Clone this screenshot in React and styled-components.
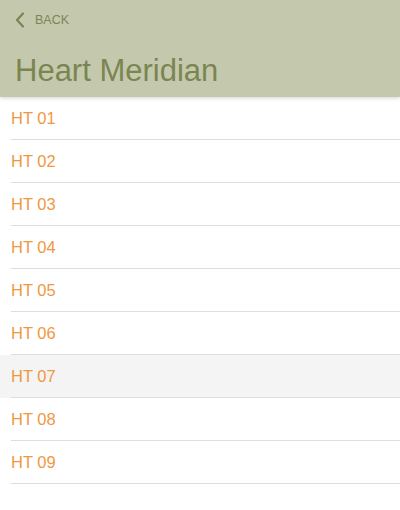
import React from "react";
import styled, { createGlobalStyle } from "styled-components";

const GlobalStyle = createGlobalStyle`
  html, body {
    margin: 0;
    padding: 0;
    background: #ffffff;
    font-family: "Liberation Sans", Arial, sans-serif;
  }
`;

const Page = styled.div`
  width: 400px;
  min-height: 510px;
  background: #ffffff;
`;

const Header = styled.header`
  position: relative;
  z-index: 1;
  height: 97px;
  box-sizing: border-box;
  padding: 10px 15px 0 15px;
  background: #c4c9ae;
  box-shadow: 0 1px 4px rgba(0, 0, 0, 0.18);
  display: flex;
  flex-direction: column;
`;

const BackButton = styled.button`
  display: flex;
  align-items: center;
  gap: 10px;
  height: 20px;
  padding: 0;
  border: none;
  background: none;
  color: #7b8552;
  font-family: inherit;
  font-size: 12.5px;
  cursor: pointer;
`;

const Title = styled.h1`
  margin: 23px 0 0 0;
  font-size: 31px;
  font-weight: 400;
  line-height: 36px;
  color: #7b8552;
`;

const List = styled.ul`
  list-style: none;
  margin: 0;
  padding: 0;
`;

const Row = styled.li`
  padding-left: 11px;
  background: ${(p) => (p.$active ? "#f4f4f4" : "#ffffff")};
`;

const RowInner = styled.div`
  height: 42px;
  display: flex;
  align-items: center;
  border-bottom: 1px solid #dedede;
  color: #f0983f;
  font-size: 16.5px;
`;

const Chevron = () => (
  <svg width="10" height="16" viewBox="0 0 10 16">
    <path
      d="M8 1.5 L2 8 L8 14.5"
      fill="none"
      stroke="#7b8552"
      strokeWidth="2.2"
      strokeLinecap="round"
      strokeLinejoin="round"
    />
  </svg>
);

const points = ["01", "02", "03", "04", "05", "06", "07", "08", "09"];

export default function App() {
  return (
    <Page>
      <GlobalStyle />
      <Header>
        <BackButton>
          <Chevron />
          BACK
        </BackButton>
        <Title>Heart Meridian</Title>
      </Header>
      <List>
        {points.map((n) => (
          <Row key={n} $active={n === "07"}>
            <RowInner>HT {n}</RowInner>
          </Row>
        ))}
      </List>
    </Page>
  );
}
